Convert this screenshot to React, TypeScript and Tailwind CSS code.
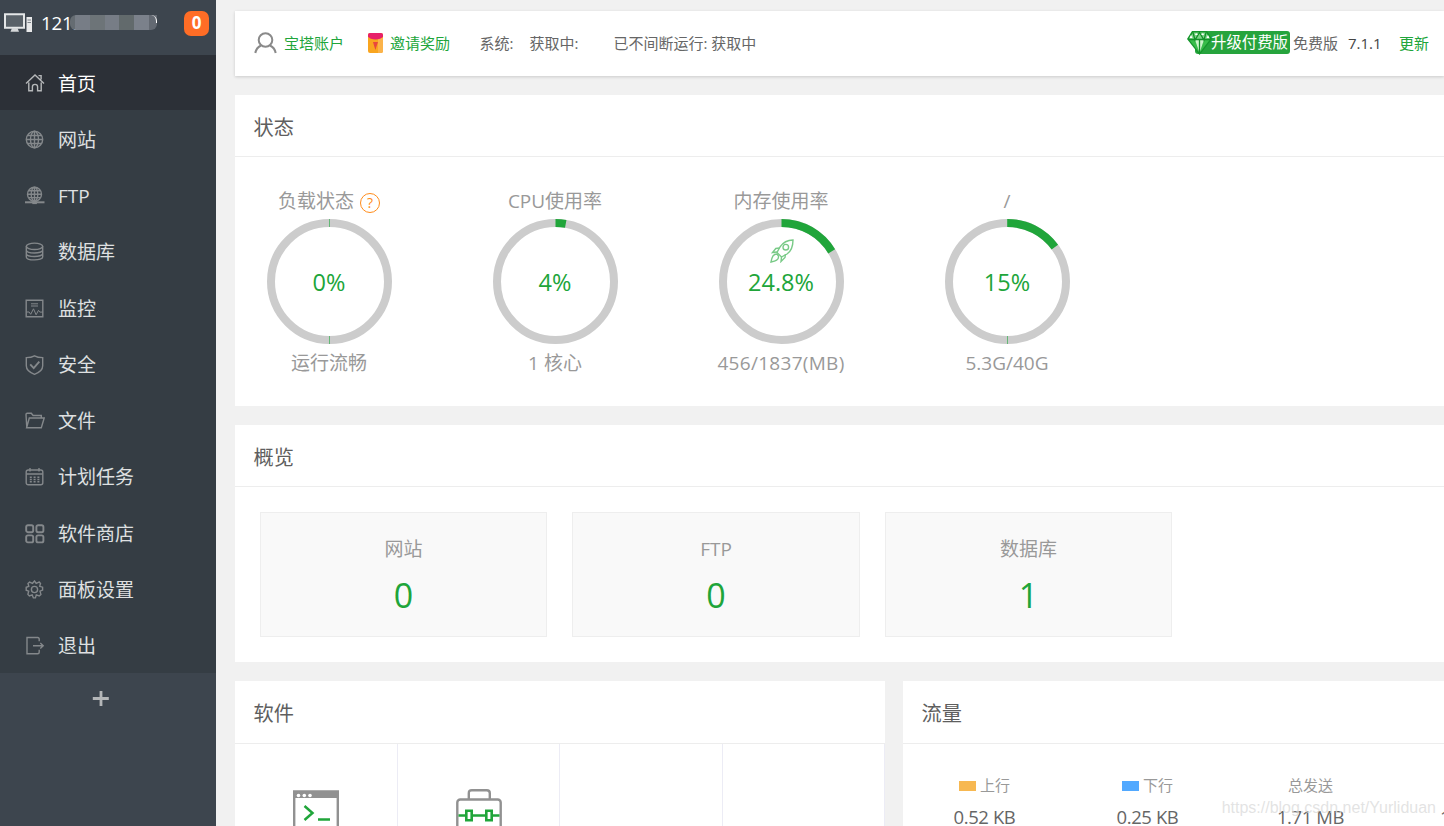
import type { ReactNode } from "react";

const menus: { name: string; icon: ReactNode; active?: boolean }[] = [
  {
    name: "首页",
    active: true,
    icon: (
      <path d="M1 10.5 10 2l9 8.5M13.5 2.6h2.6v4M3.8 9.5v8.2h3.6v-3.9c0-1.4 1.1-2.4 2.6-2.4s2.6 1 2.6 2.4v3.9h3.6V9.5" />
    ),
  },
  {
    name: "网站",
    icon: (
      <>
        <circle cx="9.5" cy="9.5" r="8.2" />
        <ellipse cx="9.5" cy="9.5" rx="4" ry="8.2" />
        <path d="M9.5 1.3v16.4M1.3 9.5h16.4M2.8 5.5h13.4M2.8 13.5h13.4" />
      </>
    ),
  },
  {
    name: "FTP",
    icon: (
      <>
        <circle cx="9.5" cy="8.2" r="7" />
        <ellipse cx="9.5" cy="8.2" rx="3.3" ry="7" />
        <path d="M9.5 1.2V17M2.5 8.2h14M3.8 4.8h11.4M3.8 11.6h11.4" />
        <path d="M0 16.3h19.5" strokeWidth="2" />
        <path d="M7.3 16.5h4.6" strokeWidth="3.2" />
      </>
    ),
  },
  {
    name: "数据库",
    icon: (
      <>
        <ellipse cx="9.5" cy="4.3" rx="8.2" ry="3.2" />
        <path d="M1.3 4.3v10.6c0 4 16.4 4 16.4 0V4.3M1.3 8c0 4 16.4 4 16.4 0M1.3 11.5c0 4 16.4 4 16.4 0" />
      </>
    ),
  },
  {
    name: "监控",
    icon: (
      <>
        <path d="M1.2 1.2h16.6v16.6H1.2z" />
        <path d="M6 4.8h7M6 7h7M1.5 13h2.6l1.6 2.3L8.5 9.8l2.6 6 2.4-4.5 1.3 1.8h3" strokeWidth="1" />
      </>
    ),
  },
  {
    name: "安全",
    icon: (
      <>
        <path d="M9.5.8c2.5 1.4 5.1 1.8 8.2 1.8v8.1c0 4-3.6 6.9-8.2 8.6-4.6-1.7-8.2-4.6-8.2-8.6V2.6C4.4 2.6 7 2.2 9.5.8z" />
        <path d="m5.2 9.4 3.5 3.7 5.6-6.4" strokeWidth="1.9" />
      </>
    ),
  },
  {
    name: "文件",
    icon: (
      <path d="M1.8 16.5 1 3.5c0-.8.4-1.2 1.2-1.2h4.1l1.8 2.2h8.2V7M1.6 16.8 4.3 7h14.9l-2.9 9.8z" />
    ),
  },
  {
    name: "计划任务",
    icon: (
      <>
        <rect x="1.2" y="3" width="16.6" height="14.8" rx="2" />
        <path d="M1.2 7h16.6M5 1v3.6M14 1v3.6" />
        <path d="M4.8 10.2h9.6M4.8 12.5h9.6M4.8 14.8h9.6" strokeDasharray="2 1.8" />
      </>
    ),
  },
  {
    name: "软件商店",
    icon: (
      <g strokeWidth="1.9">
        <rect x="1.2" y="1.2" width="7" height="7" rx="1.7" />
        <rect x="11.4" y="1.2" width="7" height="7" rx="1.7" />
        <rect x="1.2" y="11.4" width="7" height="7" rx="1.7" />
        <rect x="11.4" y="11.4" width="7" height="7" rx="1.7" />
      </g>
    ),
  },
  {
    name: "面板设置",
    icon: (
      <>
        <path d="m9.5 1 1.7 2.4 2.2-.9.7-.5 1.4 1.4-.8 2.9 2.9.9v2.9l-2.6 1 .9 3.3-1.7 1.5-2.9-1-.9 3h-2l-1.2-3-2.8 1-1.5-1.5.8-3.2-2.5-1V7.3l2.6-1-.8-2.8L4.6 2l2.9 1.3z" />
        <circle cx="9.5" cy="9.5" r="3.1" />
      </>
    ),
  },
  {
    name: "退出",
    icon: (
      <path d="M14.2 5.2V3q0-1.5-1.5-1.5H2v16.3h10.7q1.5 0 1.5-1.5v-2.5M8 9.7h10M15.3 7l2.9 2.7-2.9 2.7" />
    ),
  },
];

const gauges = [
  { title: "负载状态", arc: 0, text: "0%", desc: "运行流畅", help: true, tick: true },
  { title: "CPU使用率", arc: 2.8, text: "4%", desc: "1 核心" },
  { title: "内存使用率", arc: 16.4, text: "24.8%", desc: "456/1837(MB)", rocket: true },
  { title: "/", arc: 15, text: "15%", desc: "5.3G/40G", tick: true },
];

const overview = [
  { name: "网站", count: 0 },
  { name: "FTP", count: 0 },
  { name: "数据库", count: 1 },
];

const traffic = [
  { name: "上行", value: "0.52 KB", dot: "bg-[#f7b851]" },
  { name: "下行", value: "0.25 KB", dot: "bg-[#52a9ff]" },
  { name: "总发送", value: "1.71 MB" },
  { name: "总接收", value: "1.98 MB" },
];

function Sidebar() {
  return (
    <aside className="w-[216px] shrink-0 bg-[#3d454e]">
      <div className="flex h-[55px] pt-[11px] pl-1 pr-[7px]">
        <svg className="mt-[1px] shrink-0" width="29" height="22" viewBox="0 0 29 22">
          <path d="M1 2.2h19v13.5H1z" fill="#596168" stroke="#e4e6e7" strokeWidth="2" />
          <path d="M8 16h5.5l1.5 3.8H6.5z" fill="#d5d7d9" />
          <path d="M22.5 5H28v15h-5.5z" fill="#e8e9ea" />
          <path d="M23.5 8h3.5M23.5 10.5h3.5" stroke="#7b8187" />
        </svg>
        <div className="relative ml-2 flex h-6 items-center text-[18.75px] leading-6 tracking-[-0.2px] text-white">
          <span className="w-[116px]">121.</span>
          <div className="absolute left-[29px] top-1 flex h-[15px] w-[87px] overflow-hidden rounded-l-[6px] rounded-br-[6px]">
            <i className="w-[5px] bg-[#656c72]" />
            <i className="w-[15px] bg-[#777d86]" />
            <i className="w-[15px] bg-[#6d7478]" />
            <i className="w-[15px] bg-[#777d86]" />
            <i className="w-[15px] bg-[#626a6c]" />
            <i className="w-[15px] bg-[#7b818b]" />
            <i className="w-2 bg-[#636972]" />
          </div>
          <i className="absolute left-[110px] top-1 h-[8px] w-[6px] rounded-tr-[6px] border-r border-white" />
        </div>
        <span className="ml-auto h-[25px] w-[25px] rounded-[7px] bg-[#ff6d26] text-center text-[17px] font-bold leading-6 text-white">
          0
        </span>
      </div>
      <ul className="h-[618px] bg-[#353d44]">
        {menus.map((m) => (
          <li
            key={m.name}
            className={
              m.active
                ? "mb-[1.25px] flex h-[55px] items-center bg-[#2c3037] pl-[25px] text-white"
                : "mb-[1.25px] flex h-[55px] items-center pl-[25px] text-[#dfe0e1]"
            }
          >
            <svg
              className={m.active ? "mt-px text-[#b6b8ba]" : "mt-[2px] text-[#84888b]"}
              width="20"
              height="20"
              viewBox="0 0 20 20"
              fill="none"
              stroke="currentColor"
              strokeWidth="1.4"
            >
              {m.icon}
            </svg>
            <span className="ml-[13px] mt-[2px] text-[19px] leading-[26px]">{m.name}</span>
          </li>
        ))}
      </ul>
      <div className="flex h-[52px] items-center pl-[92px]">
        <svg width="18" height="18" viewBox="0 0 18 18" stroke="#b4b6b8" strokeWidth="2.8">
          <path d="M9 1v15M.8 8.5h16" />
        </svg>
      </div>
    </aside>
  );
}

function TopBar() {
  return (
    <div className="flex h-[65px] items-center bg-white pb-[2px] pl-[19px] text-[15px] leading-5 text-[#666] shadow-[0_1px_3px_rgba(0,0,0,0.16)]">
      <svg className="mt-px" width="23" height="22" viewBox="0 0 23 22" fill="none" stroke="#8a8a8a" strokeWidth="2">
        <circle cx="11.5" cy="8" r="6.8" />
        <path d="M1.3 21c.6-3.5 2.7-6 5.7-7.5M21.7 21c-.6-3.5-2.7-6-5.7-7.5" />
      </svg>
      <span className="ml-[7px] w-[59px] whitespace-nowrap text-[#20a53a]">宝塔账户</span>
      <svg className="ml-[25px]" width="15" height="20" viewBox="0 0 15 20">
        <rect width="15" height="20" rx="2" fill="#f9a51f" />
        <path d="M10 5h5v13q0 2-2 2h-3z" fill="#fbb34a" />
        <path d="M0 2q0-2 2-2h11q2 0 2 2v1.2C13 7.5 2 7.5 0 3.2z" fill="#e7206a" />
        <path d="M5 9h5l-1.5 4.5L7.5 17l-1.2-3.5z" fill="#e9473d" />
      </svg>
      <span className="ml-[7px] w-[61px] whitespace-nowrap text-[#20a53a]">邀请奖励</span>
      <span className="ml-[28.5px] w-[50px] whitespace-nowrap">系统:</span>
      <span className="w-[84px] whitespace-nowrap">获取中:</span>
      <span className="whitespace-nowrap">已不间断运行: 获取中</span>
      <div className="ml-auto mr-[15px] flex items-center whitespace-nowrap">
        <div className="relative mr-[3px] flex h-[23px] w-[95px] items-center rounded-[3px] bg-[#26a43d] pl-4 text-[15.4px] text-white">
          <svg className="absolute -left-2 -top-[1px]" width="26" height="26" viewBox="0 0 26 26">
            <path d="M5 1h15l5 8-12.5 16L0 9z" fill="#14962b" />
            <path d="M6 2.5h13l4 6.5H2z" fill="#7ed488" />
            <path d="m2 9.5 6 .5 4.5 13zM23 9.5l-6 .5-4.5 13z" fill="#39bd4a" />
            <path d="M8 10h9l-4.5 13z" fill="#cbf5c9" />
            <path d="M6 2.5 8 10l4.5-7.5L17 10l2-7.5M2 9.5h21M12.5 10v13" fill="none" stroke="#129129" strokeWidth="1.3" />
            <path d="M4 5 2.5 8h3zM21 5l1.5 3h-3zM9 3 8 5h3zM16 3l1 2h-3z" fill="#fff" />
          </svg>
          <span className="relative">升级付费版</span>
        </div>
        <span className="w-[55px]">免费版</span>
        <span className="w-[51px] text-[#444]">7.1.1</span>
        <span className="text-[#20a53a]">更新</span>
      </div>
    </div>
  );
}

function CardTitle({ children, tall }: { children: string; tall?: boolean }) {
  return (
    <h3
      className={`${tall ? "h-[63px]" : "h-[62px]"} border-b border-[#ededed] pl-[18.5px] pt-[2px] text-[20.2px] leading-[60px] text-[#5e5e5e]`}
    >
      {children}
    </h3>
  );
}

function Rocket() {
  return (
    <svg
      className="absolute left-[51px] top-[20px]"
      width="24"
      height="24"
      viewBox="0 0 24 24"
      fill="none"
      stroke="#79ca87"
      strokeWidth="1.4"
    >
      <path d="M23 1c-5.5 0-10 2.5-13 7l-3 5.5 4.5 4.5 5.5-3c4.5-3 6-8 6-14z" />
      <circle cx="15.8" cy="8.2" r="2.8" />
      <path d="M9.5 9l-3.7.5-3.3 4 4.5-.5M15.5 15l-.5 3.5-4 4 .5-4.5M7 15c-4 0-5 3-6 8 4.5-1 8-2 7.5-6z" />
    </svg>
  );
}

function Status() {
  return (
    <section className="mt-[19px] h-[311px] bg-white">
      <CardTitle>状态</CardTitle>
      <ul className="ml-[-19px] flex pt-[31px]">
        {gauges.map((g) => (
          <li key={g.title} className="flex w-[226px] flex-col items-center text-[19px] leading-[26px] text-[#999]">
            <div className="flex h-[26px] items-center">
              {g.title}
              {g.help && (
                <span className="ml-1.5 mt-[3px] h-5 w-5 rounded-full border border-[#ff8c1a] text-center text-[14px] leading-[18px] text-[#ff8c1a]">
                  ?
                </span>
              )}
            </div>
            <div className="relative mt-[5px] h-[125px] w-[125px]">
              <svg width="125" height="125" viewBox="0 0 125 125" fill="none" strokeWidth="8">
                <circle cx="62.5" cy="62.5" r="58.5" stroke="#ccc" />
                {g.tick && <path d="M62.5 0v8M62.5 117v8" stroke="#64b876" strokeWidth="1" />}
                {g.arc > 0 && (
                  <circle
                    cx="62.5"
                    cy="62.5"
                    r="58.5"
                    stroke="#20a53a"
                    pathLength="100"
                    strokeDasharray={`${g.arc} 100`}
                    transform="rotate(-90 62.5 62.5)"
                  />
                )}
              </svg>
              {g.rocket && <Rocket />}
              <span className="absolute inset-0 text-center text-[23.5px] leading-[127px] text-[#20a53a]">{g.text}</span>
            </div>
            <div className={g.rocket ? "mt-[6px] whitespace-nowrap tracking-[0.3px]" : "mt-[6px] whitespace-nowrap"}>
              {g.desc}
            </div>
          </li>
        ))}
      </ul>
    </section>
  );
}

function Overview() {
  return (
    <section className="mt-[19px] h-[237px] bg-white">
      <CardTitle>概览</CardTitle>
      <ul className="flex gap-[25.3px] pl-[25px] pt-[25px]">
        {overview.map((o) => (
          <li key={o.name} className="h-[125px] w-[287.2px] border border-[#eee] bg-[#f9f9f9] pt-[23px] text-center">
            <p className="text-[19px] leading-[26px] text-[#999]">{o.name}</p>
            <p className="mt-[13px] text-[34px] leading-[41px] text-[#20a53a]">{o.count}</p>
          </li>
        ))}
      </ul>
    </section>
  );
}

function Software() {
  return (
    <section className="h-[300px] w-[650px] shrink-0 bg-white">
      <CardTitle tall>软件</CardTitle>
      <div className="grid h-[237px] grid-cols-4">
        <div className="flex justify-center border-r border-[#ececf5] pt-[46px]">
          <svg width="46" height="46" viewBox="0 0 46 46" fill="none">
            <path d="M1.2 1.5h43.6v43H1.2z" stroke="#919191" strokeWidth="2.4" />
            <path d="M1 1h44v7H1z" fill="#919191" />
            <g fill="#fff">
              <circle cx="5.5" cy="5.5" r="1.8" />
              <circle cx="11.3" cy="5.5" r="1.8" />
              <circle cx="17" cy="5.5" r="1.8" />
            </g>
            <path d="m11.5 16 8 7-8 7M25 29.5h12" stroke="#20a53a" strokeWidth="2.5" />
          </svg>
        </div>
        <div className="flex justify-center border-r border-[#ececf5] pl-px pt-[45px]">
          <svg width="46" height="46" viewBox="0 0 46 46" fill="none">
            <g stroke="#919191" strokeWidth="2.4">
              <path d="M12.8 10V4.2q0-3 3-3h15q3 0 3 3V10" />
              <rect x="1.3" y="10.5" width="43.4" height="34" rx="3" />
            </g>
            <g stroke="#20a53a" strokeWidth="2.6">
              <path d="M2.5 26.5h7M16.5 26.5h13M36.5 26.5h7" />
              <path d="M10.3 21.8h5.4v9.4h-5.4zM30.3 21.8h5.4v9.4h-5.4z" />
            </g>
          </svg>
        </div>
        <div className="border-r border-[#ececf5]" />
        <div className="border-r border-[#ececf5]" />
      </div>
    </section>
  );
}

function Traffic() {
  return (
    <section className="h-[300px] w-[652px] shrink-0 bg-white">
      <CardTitle tall>流量</CardTitle>
      <ul className="grid grid-cols-4 pt-[30px] text-center">
        {traffic.map((t) => (
          <li key={t.name}>
            <p className="flex items-center justify-center text-[15px] leading-[22px] text-[#999]">
              {t.dot && <i className={`mr-1 mt-px h-2.5 w-[17px] ${t.dot}`} />}
              {t.name}
            </p>
            <p className="mt-[8px] text-[18.5px] leading-[26px] tracking-[-0.4px] text-[#666]">{t.value}</p>
          </li>
        ))}
      </ul>
    </section>
  );
}

export default function App() {
  return (
    <div className="relative flex h-[826px] w-[1444px] overflow-hidden bg-[#f1f1f1] font-['Open_Sans','Noto_Sans_CJK_SC',sans-serif] font-normal">
      <Sidebar />
      <main className="min-w-0 flex-1 pl-[19px] pt-[11px]">
        <TopBar />
        <Status />
        <Overview />
        <div className="mt-[19px] flex gap-[18px]">
          <Software />
          <Traffic />
        </div>
      </main>
      <span className="absolute bottom-[6px] right-2 font-['Liberation_Sans',sans-serif] text-[16px] leading-6 text-[#dcdcdc]/80">
        https://blog.csdn.net/Yurliduan
      </span>
    </div>
  );
}
